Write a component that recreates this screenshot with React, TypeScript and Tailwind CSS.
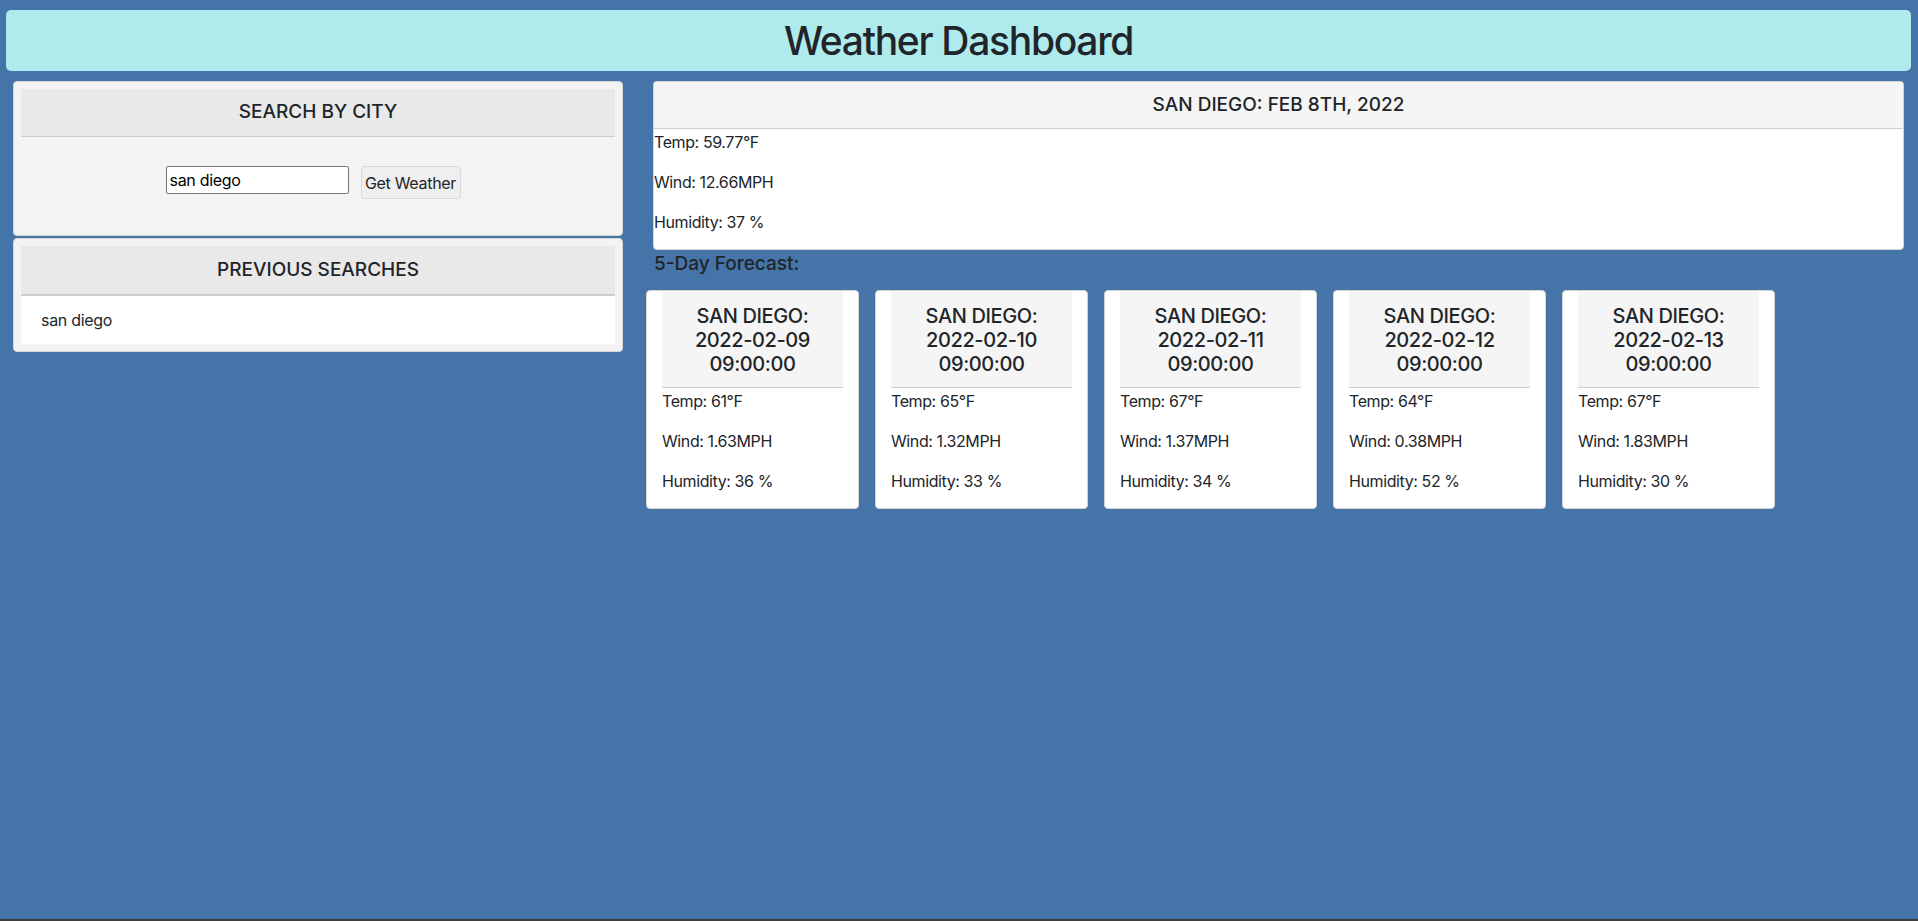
import { useState } from "react";

type Forecast = {
  date: string;
  temp: string;
  wind: string;
  humidity: string;
};

const forecast: Forecast[] = [
  { date: "2022-02-09", temp: "61", wind: "1.63", humidity: "36" },
  { date: "2022-02-10", temp: "65", wind: "1.32", humidity: "33" },
  { date: "2022-02-11", temp: "67", wind: "1.37", humidity: "34" },
  { date: "2022-02-12", temp: "64", wind: "0.38", humidity: "52" },
  { date: "2022-02-13", temp: "67", wind: "1.83", humidity: "30" },
];

export default function App() {
  const [city, setCity] = useState("san diego");
  const [history] = useState(["san diego"]);

  return (
    <div className="h-[921px] bg-[#4574a8] pt-[10px] px-[6px] border-b-2 border-[#3d3d3d] font-['Inter',sans-serif] text-[#212529]">
      {/* Header */}
      <header className="h-[61px] mr-[1px] rounded-[5px] bg-[#afeaec] flex items-center justify-center">
        <h1 className="text-[39px] font-medium tracking-[-1.3px] pt-[2px]">
          Weather Dashboard
        </h1>
      </header>

      <main className="flex mt-[10px]">
        {/* Left column */}
        <aside className="ml-[7px] w-[610px] flex flex-col">
          <section className="h-[155px] bg-[#f3f3f3] border border-[#d4d4d4] rounded-[4px] p-[7px]">
            <h2 className="h-[48px] bg-[#e9e9e9] border-b border-[#cdcdcd] flex items-center justify-center text-[19px] font-medium">
              SEARCH BY CITY
            </h2>
            <div className="flex justify-center items-start gap-3 pt-[29px] pr-[10px]">
              <input
                type="text"
                value={city}
                onChange={(e) => setCity(e.target.value)}
                className="w-[183px] h-[28px] border border-[#767676] rounded-[2px] bg-white px-[3px] text-[16px] tracking-[-0.3px] text-black outline-none"
              />
              <button
                type="button"
                className="w-[100px] h-[33px] bg-[#efefef] border border-[#d9d9d9] rounded-[4px] text-[16px] tracking-[-0.3px]"
              >
                Get Weather
              </button>
            </div>
          </section>

          <section className="mt-[2px] bg-[#f3f3f3] border border-[#d4d4d4] rounded-[4px] p-[7px]">
            <h2 className="h-[50px] bg-[#e9e9e9] border-b-2 border-[#cdcdcd] flex items-center justify-center text-[19px] font-medium">
              PREVIOUS SEARCHES
            </h2>
            <ul>
              {history.map((item) => (
                <li
                  key={item}
                  className="h-[48px] bg-white flex items-center pl-[20px] text-[16px] tracking-[-0.3px]"
                >
                  {item}
                </li>
              ))}
            </ul>
          </section>
        </aside>

        {/* Right column */}
        <div className="ml-[23px] flex-1">
          <section className="ml-[7px] mr-[8px] bg-white border border-[#d4d4d4] rounded-[4px]">
            <h2 className="h-[47px] bg-[#f5f5f5] border-b border-[#cdcdcd] flex items-center justify-center text-[19px] font-medium">
              SAN DIEGO: FEB 8TH, 2022
            </h2>
            <div className="pt-[1px] text-[16px] leading-[24px] tracking-[-0.4px]">
              <p className="mb-4">Temp: 59.77°F</p>
              <p className="mb-4">Wind: 12.66MPH</p>
              <p className="mb-[15px]">Humidity: 37 %</p>
            </div>
          </section>

          <h3 className="ml-[8px] mt-[2px] text-[19px] leading-[24px] font-medium">
            5-Day Forecast:
          </h3>

          <div className="flex gap-4 mt-[14px]">
            {forecast.map((day) => (
              <div
                key={day.date}
                className="w-[213px] bg-white border border-[#d4d4d4] rounded-[4px] px-[15px]"
              >
                <h4 className="bg-[#f5f5f5] border-b border-[#cdcdcd] pt-[13px] pb-[11px] text-center text-[20px] leading-[24px] font-medium tracking-[-0.4px]">
                  SAN DIEGO:
                  <br />
                  {day.date}
                  <br />
                  09:00:00
                </h4>
                <div className="pt-[1px] text-[16px] leading-[24px] tracking-[-0.4px]">
                  <p className="mb-4">Temp: {day.temp}°F</p>
                  <p className="mb-4">Wind: {day.wind}MPH</p>
                  <p className="mb-[15px]">Humidity: {day.humidity} %</p>
                </div>
              </div>
            ))}
          </div>
        </div>
      </main>
    </div>
  );
}
